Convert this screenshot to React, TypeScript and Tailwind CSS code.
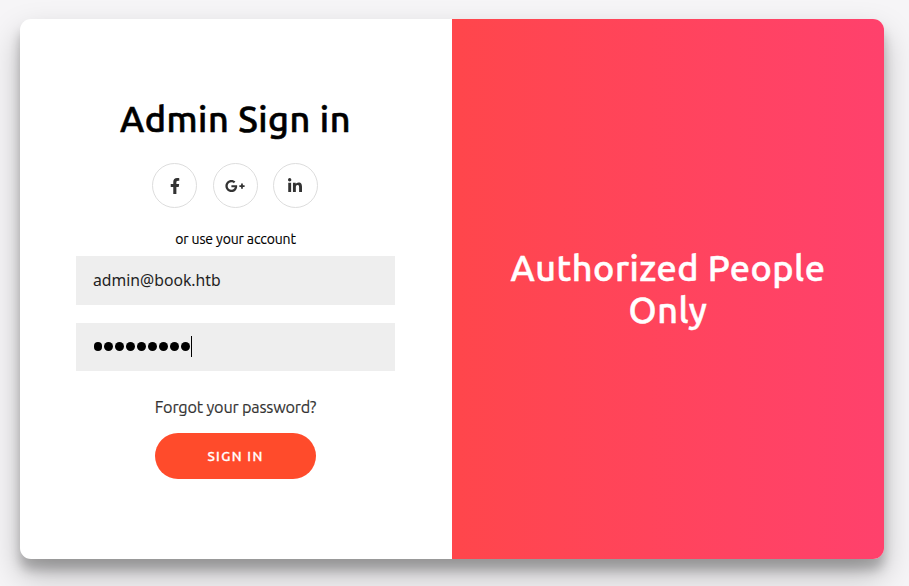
import type { ReactNode } from 'react';
import { FaFacebookF, FaGooglePlusG, FaLinkedinIn } from 'react-icons/fa';

function SocialButton({ label, children }: { label: string; children: ReactNode }) {
  return (
    <a
      href="#"
      aria-label={label}
      className="flex h-[45px] w-[45px] items-center justify-center rounded-full border border-[#dddddd] text-base text-[#333333]"
    >
      {children}
    </a>
  );
}

export default function App() {
  return (
    <main className="h-[586px] w-[909px] overflow-hidden bg-[#f6f5f7] pt-[19px] pl-5 font-['Ubuntu','Noto_Sans',sans-serif] text-black">
      <div className="flex h-[540px] w-[864px] overflow-hidden rounded-[11px] bg-white shadow-[0_16px_32px_rgba(0,0,0,0.25),0_11px_11px_rgba(0,0,0,0.22)]">
        <form className="flex w-[432px] shrink-0 flex-col items-center pt-[79px] pr-[57px] pl-14">
          <h1 className="h-[42px] text-[36px] leading-[42px] font-medium tracking-[0.55px] whitespace-nowrap [-webkit-text-stroke:0.6px_black]">Admin Sign in</h1>
          <div className="mt-[23px] mr-[0.6px] flex gap-[15.25px]">
            <SocialButton label="Facebook">
              <FaFacebookF />
            </SocialButton>
            <SocialButton label="Google Plus">
              <FaGooglePlusG className="h-4 w-5" />
            </SocialButton>
            <SocialButton label="LinkedIn">
              <FaLinkedinIn />
            </SocialButton>
          </div>
          <span className="mt-[22px] h-[18px] text-[14px] leading-[18px] tracking-[-0.12px] whitespace-nowrap [-webkit-text-stroke:0.15px_black]">or use your account</span>
          <div className="mt-[8px] flex h-[48.5px] w-full items-center bg-[#eeeeee] pt-px pl-[17px] text-[15.75px] text-[#222222]">
            <span className="whitespace-nowrap font-['Noto_Sans',sans-serif]">admin@book.htb</span>
          </div>
          <div className="mt-[18px] flex h-[48.5px] w-full items-center bg-[#eeeeee] pl-[17.5px]">
            <div className="flex gap-[2px]">
              {Array.from({ length: 9 }, (_, i) => (
                <span key={i} className="h-[9px] w-[8.9px] rounded-full bg-black" />
              ))}
            </div>
            <span className="ml-[1px] h-[21px] w-px bg-black" />
          </div>
          <a href="#" className="mt-[26px] h-5 text-[16.25px] leading-5 tracking-[-0.2px] whitespace-nowrap text-[#333333] [-webkit-text-stroke:0.15px_#333333]">
            Forgot your password?
          </a>
          <button
            type="button"
            className="mt-4 h-[46px] w-[161px] rounded-full bg-[#ff4b2b] text-[13.5px] font-medium tracking-[1.35px] text-white [-webkit-text-stroke:0.3px_white]"
          >
            SIGN IN
          </button>
        </form>
        <section className="flex w-[432px] items-center justify-center bg-linear-to-r from-[#ff464b] to-[#ff416c] text-center text-white">
          <h2 className="text-[36px] leading-[42px] font-medium tracking-[0.5px] whitespace-nowrap [-webkit-text-stroke:0.5px_white]">
            Authorized People
            <br />
            Only
          </h2>
        </section>
      </div>
    </main>
  );
}
